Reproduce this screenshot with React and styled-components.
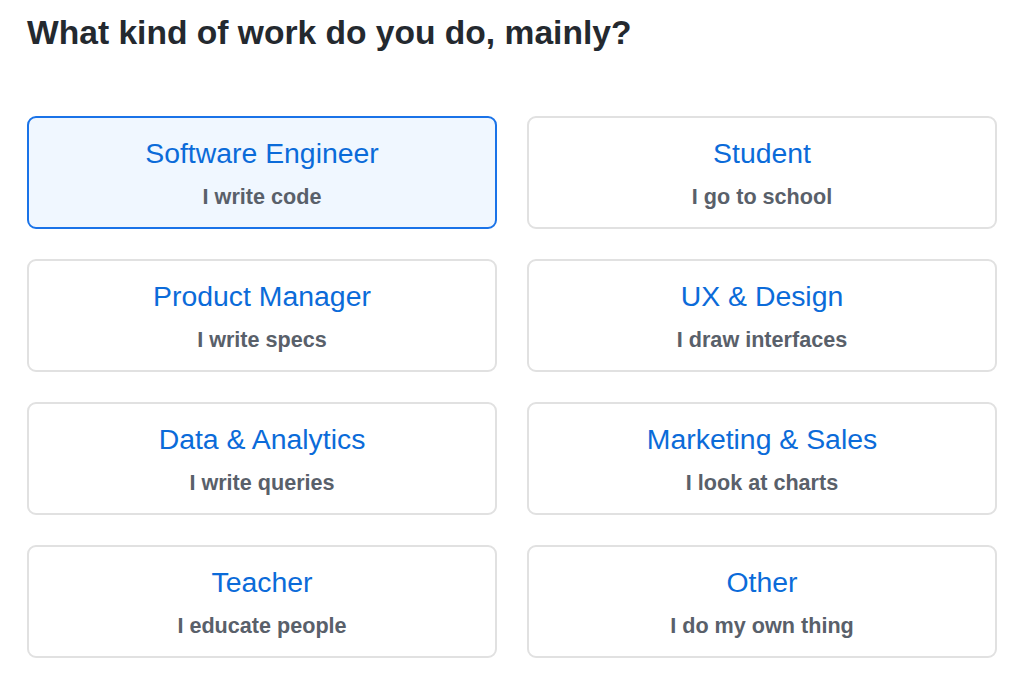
import React from 'react';
import styled, { createGlobalStyle } from 'styled-components';

const options = [
    { title: 'Software Engineer', sub: 'I write code' },
    { title: 'Student', sub: 'I go to school' },
    { title: 'Product Manager', sub: 'I write specs' },
    { title: 'UX & Design', sub: 'I draw interfaces' },
    { title: 'Data & Analytics', sub: 'I write queries' },
    { title: 'Marketing & Sales', sub: 'I look at charts' },
    { title: 'Teacher', sub: 'I educate people' },
    { title: 'Other', sub: 'I do my own thing' },
];

export default function App() {
    const selected = 0;
    return (
        <>
            <GlobalStyle />
            <Page>
                <Heading>What kind of work do you do, mainly?</Heading>
                <Grid>
                    {options.map((o, i) => (
                        <Card key={o.title} $active={i === selected}>
                            <Title>{o.title}</Title>
                            <Sub>{o.sub}</Sub>
                        </Card>
                    ))}
                </Grid>
            </Page>
        </>
    );
}

const GlobalStyle = createGlobalStyle`
    body {
        margin: 0;
        background: #ffffff;
        font-family: "Liberation Sans", Arial, sans-serif;
    }
`;

const Page = styled.div`
    padding: 13px 27px 0 27px;
`;

const Heading = styled.h1`
    margin: 0;
    font-size: 33.6px;
    line-height: 40px;
    font-weight: 700;
    color: #24292f;
`;

const Grid = styled.div`
    margin-top: 63px;
    display: grid;
    grid-template-columns: 470px 470px;
    column-gap: 30px;
    row-gap: 30px;
`;

const Card = styled.div`
    box-sizing: border-box;
    height: 113px;
    border-radius: 9px;
    border: ${p => (p.$active ? '2px solid #1a73e8' : '2px solid #e1e1e1')};
    background: ${p => (p.$active ? '#f0f7ff' : '#ffffff')};
    display: flex;
    flex-direction: column;
    align-items: center;
    justify-content: center;
    cursor: pointer;
`;

const Title = styled.div`
    font-size: 28.4px;
    line-height: 34px;
    color: #0b6bd9;
`;

const Sub = styled.div`
    margin-top: 14px;
    font-size: 21.6px;
    line-height: 26px;
    font-weight: 700;
    color: #59606a;
`;
